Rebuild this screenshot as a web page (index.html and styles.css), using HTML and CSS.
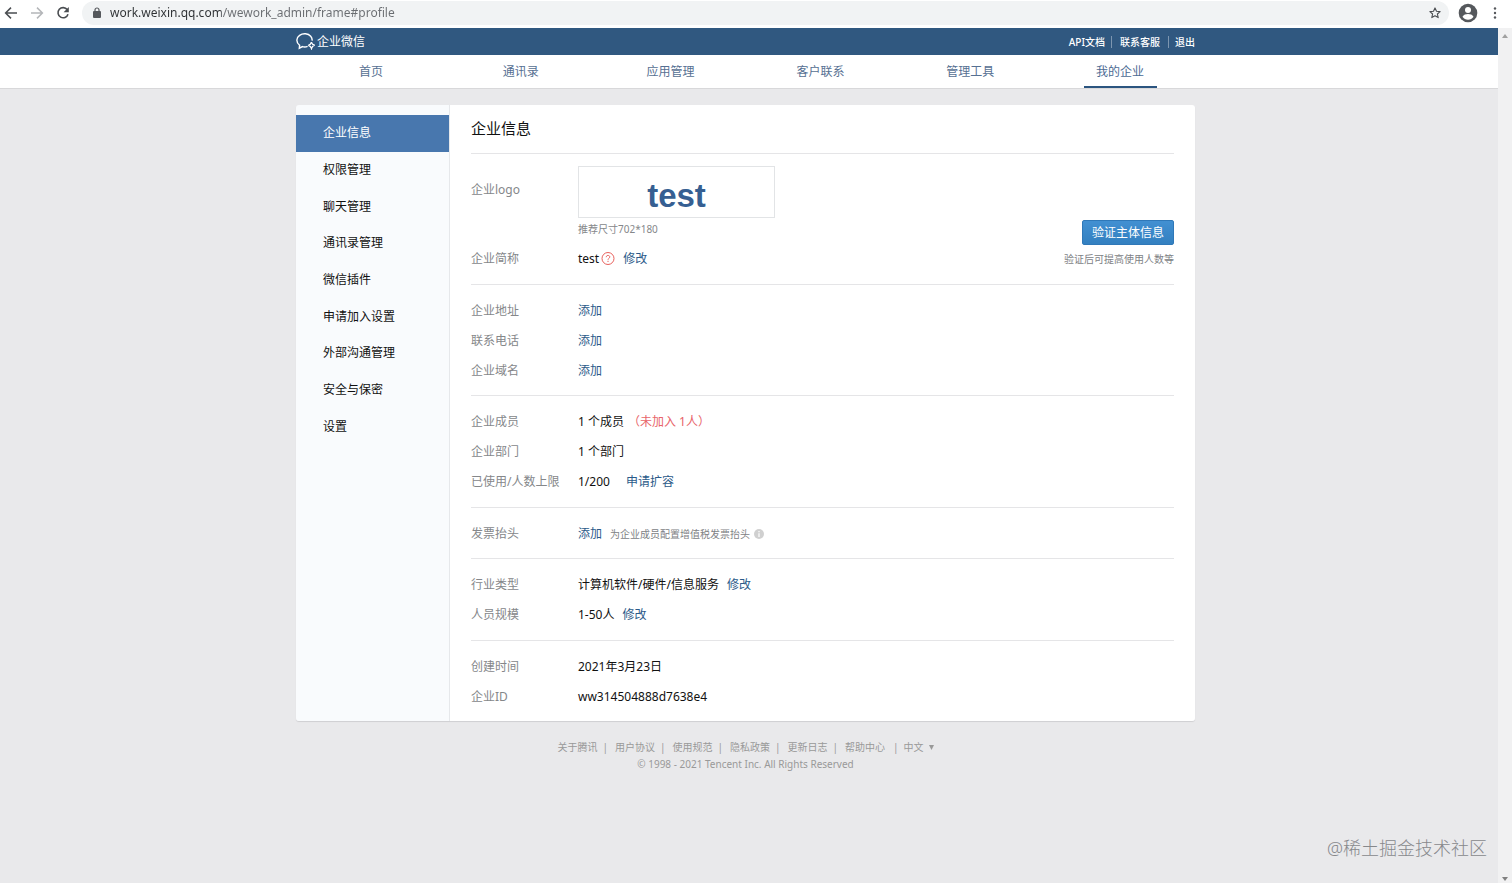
FILE: index.html
```html
<!DOCTYPE html>
<html lang="zh-CN">
<head>
<meta charset="utf-8">
<title>企业微信</title>
<link rel="stylesheet" href="styles.css">
</head>
<body>
<div class="browser">
  <button class="browser-btn" aria-label="后退"><svg width="14" height="14" viewBox="0 0 14 14" fill="none" stroke="#4a4d51" stroke-width="1.5"><path d="M13 7H1.8M7 1.6 1.6 7 7 12.4"/></svg></button>
  <button class="browser-btn" aria-label="前进"><svg width="14" height="14" viewBox="0 0 14 14" fill="none" stroke="#b4b6b9" stroke-width="1.5"><path d="M1 7h11.2M7 1.6 12.4 7 7 12.4"/></svg></button>
  <button class="browser-btn" aria-label="刷新"><svg width="14" height="14" viewBox="0 0 14 14"><path d="M11.2 3.6A5.1 5.1 0 1 0 12 8.2" fill="none" stroke="#4a4d51" stroke-width="1.6"/><path d="M12.8 1v5.2H7.6z" fill="#4a4d51"/></svg></button>
  <label class="address">
    <svg width="10" height="12" viewBox="0 0 10 12"><rect x="1" y="4" width="8" height="7" rx="1" fill="#55585c"/><path d="M3 4.5V3a2 2 0 0 1 4 0v1.500" fill="none" stroke="#55585c" stroke-width="1.2"/></svg>
    <input class="address-input" type="text" aria-label="地址" value="work.weixin.qq.com/wework_admin/frame#profile">
    <svg width="14" height="14" viewBox="0 0 14 14"><path d="m7 1.900 1.500 3.300 3.600.4-2.700 2.400.8 3.600L7 9.800l-3.200 1.800.8-3.600L1.900 5.600l3.600-.4z" fill="none" stroke="#4a4d51" stroke-width="1.100" stroke-linejoin="round"/></svg>
  </label>
  <button class="browser-btn browser-user" aria-label="用户"><svg width="20" height="20" viewBox="0 0 20 20"><circle cx="10" cy="10" r="9.300" fill="#55585c"/><circle cx="10" cy="7" r="3" fill="#fff"/><path d="M4.500 13.700c1-2 3.300-2.700 5.500-2.700s4.500.7 5.500 2.700c-1.200 1.900-3.300 3-5.500 3s-4.300-1.100-5.500-3z" fill="#fff"/></svg></button>
  <button class="browser-btn browser-more" aria-label="更多"><svg width="4" height="14" viewBox="0 0 4 14" fill="#55585c"><circle cx="2" cy="2.500" r="1.200"/><circle cx="2" cy="7" r="1.200"/><circle cx="2" cy="11.500" r="1.200"/></svg></button>
</div>
<div class="viewport">
  <div class="page">
    <header>
      <div class="topbar">
        <div class="wrap topbar-inner">
          <a class="brand" href="#">
            <svg width="20" height="17" viewBox="0 0 20 17" fill="none" stroke="#fff" stroke-width="1.400"><path d="M11.600 13.300c-1.600.7-3.500.8-5.100.3L3.300 15.200l.3-2.900C-.2 9.300.1 4.700 3.600 2.300 7-.1 12.200.3 14.700 3.200c1.100 1.300 1.600 2.800 1.400 4.400"/><path d="M15.400 9.200c.4 1.600 1.500 2.600 3.300 3-1.700.5-2.700 1.500-3.200 3.300-.5-1.800-1.500-2.800-3.200-3.200 1.700-.4 2.700-1.400 3.100-3.100z" stroke-width="1.300"/></svg>
            <span>企业微信</span>
          </a>
          <div class="toplinks"><a href="#">API文档</a><a class="support" href="#">联系客服</a><a class="logout" href="#">退出</a></div>
        </div>
      </div>
      <nav class="mainnav">
        <div class="wrap mainnav-inner">
          <a href="#">首页</a><a href="#">通讯录</a><a href="#">应用管理</a><a href="#">客户联系</a><a href="#">管理工具</a><a class="current" href="#">我的企业</a>
        </div>
      </nav>
    </header>
    <div class="page-body">
    <div class="wrap card">
      <nav class="sidebar">
        <a class="active" href="#">企业信息</a><a href="#">权限管理</a><a href="#">聊天管理</a><a href="#">通讯录管理</a><a href="#">微信插件</a><a href="#">申请加入设置</a><a href="#">外部沟通管理</a><a href="#">安全与保密</a><a href="#">设置</a>
      </nav>
      <main class="content">
        <h1>企业信息</h1>
        <section class="intro">
          <div class="intro-main">
            <div class="logo-row">
              <span class="label">企业logo</span>
              <div><div class="logo-box">test</div><div class="hint">推荐尺寸702*180</div></div>
            </div>
            <div class="row"><span class="label">企业简称</span><span>test</span>
              <svg class="help" width="14" height="14" viewBox="0 0 14 14" fill="none" stroke="#e8605c"><circle cx="7" cy="6.500" r="6"/><path d="M5.200 5.200c0-2.400 3.600-2.300 3.600-.2 0 1.300-1.800 1.400-1.800 2.700M7 8.800v1.200"/></svg>
              <a href="#">修改</a></div>
          </div>
          <div class="verify"><button class="verify-btn">验证主体信息</button><span class="note">验证后可提高使用人数等</span></div>
        </section>
        <section>
          <div class="row"><span class="label">企业地址</span><a href="#">添加</a></div>
          <div class="row"><span class="label">联系电话</span><a href="#">添加</a></div>
          <div class="row"><span class="label">企业域名</span><a href="#">添加</a></div>
        </section>
        <section class="roomy">
          <div class="row"><span class="label">企业成员</span><span>1 个成员</span><span class="warn">（未加入 1人）</span></div>
          <div class="row"><span class="label">企业部门</span><span>1 个部门</span></div>
          <div class="row wide-gap"><span class="label">已使用/人数上限</span><span>1/200</span><a href="#">申请扩容</a></div>
        </section>
        <section>
          <div class="row"><span class="label">发票抬头</span><a href="#">添加</a><span class="note">为企业成员配置增值税发票抬头</span>
            <svg class="info" width="10" height="10" viewBox="0 0 10 10"><circle cx="5" cy="5" r="5" fill="#d0d0d0"/><path d="M5 2v1.300M5 4.200V8" stroke="#fff" stroke-width="1.200"/></svg></div>
        </section>
        <section class="roomy">
          <div class="row"><span class="label">行业类型</span><span>计算机软件/硬件/信息服务</span><a href="#">修改</a></div>
          <div class="row"><span class="label">人员规模</span><span>1-50人</span><a href="#">修改</a></div>
        </section>
        <section>
          <div class="row"><span class="label">创建时间</span><span>2021年3月23日</span></div>
          <div class="row"><span class="label">企业ID</span><span>ww314504888d7638e4</span></div>
        </section>
      </main>
    </div>
    <footer class="wrap footer">
      <div class="footer-links"><a href="#">关于腾讯</a><i>|</i><a href="#">用户协议</a><i>|</i><a href="#">使用规范</a><i>|</i><a href="#">隐私政策</a><i>|</i><a href="#">更新日志</a><i>|</i><a href="#">帮助中心</a><i class="last">|</i><button class="lang">中文 <svg width="5" height="5" viewBox="0 0 5 5"><path d="M0 0h5L2.500 5z" fill="#999"/></svg></button></div>
      <div>© 1998 - 2021 Tencent Inc. All Rights Reserved</div>
    </footer>
    </div>
    <div class="watermark">@稀土掘金技术社区</div>
  </div>
  <div class="scrollbar">
    <svg width="6" height="4" viewBox="0 0 6 4"><path d="M0 4h6L3 0z" fill="#a0a0a0"/></svg>
    <svg width="6" height="4" viewBox="0 0 6 4"><path d="M0 0h6L3 4z" fill="#808080"/></svg>
  </div>
</div>
</body>
</html>
```
FILE: styles.css
```css
* { box-sizing: border-box; }
body {
  margin: 0;
  min-height: 100vh;
  display: flex;
  flex-direction: column;
  background: #fff;
  color: #111;
  font: 12px/18px "Noto Sans", "Noto Sans CJK SC", sans-serif;
}
a { color: #2b5a89; text-decoration: none; }
button { border: 0; padding: 0; background: none; font: inherit; color: inherit; }
svg { display: block; flex: none; }

.browser { display: flex; align-items: center; height: 28px; padding: 0 15px 3px 4px; }
.browser-btn { display: flex; margin-right: 12px; }
.address {
  flex: 1;
  display: flex;
  align-items: center;
  height: 24px;
  padding: 0 7px 0 10px;
  border-radius: 12px;
  background: #f1f3f4;
}
.address-input {
  flex: 1;
  min-width: 0;
  margin-left: 8px;
  padding: 0;
  border: 0;
  outline: 0;
  font: inherit;
  color: transparent;
  background: linear-gradient(90deg, #2e3134 111px, #6a6d71 111px);
  -webkit-background-clip: text;
  background-clip: text;
}
.browser-user { margin: 0 0 0 9px; }
.browser-more { margin: 0 0 0 15px; }

.viewport { flex: 1; display: flex; }
.page { flex: 1; position: relative; background: #e9e9eb; }
.scrollbar {
  width: 14px;
  padding: 6px 0 2px;
  display: flex;
  flex-direction: column;
  justify-content: space-between;
  align-items: center;
  background: #f1f1f2;
}
.wrap { max-width: 899px; margin: 0 auto; }
.topbar, .mainnav, .page-body { padding-right: 7px; }

.topbar { background: #305880; }
.topbar-inner { display: flex; justify-content: space-between; align-items: center; height: 27px; }
.brand { display: flex; align-items: center; gap: 1px; color: #fff; }
.toplinks { display: flex; font-size: 10px; line-height: 12px; font-weight: 500; }
.toplinks a { color: #fff; }
.support { margin-left: 6px; padding-left: 8px; border-left: 1px solid #7d96b0; }
.logout { margin-left: 8px; padding-left: 6px; border-left: 1px solid #7d96b0; }

.mainnav { background: #fff; border-bottom: 1px solid #d8d8da; }
.mainnav-inner { display: grid; grid-template-columns: repeat(6, 1fr); justify-items: center; }
.mainnav a { width: 73px; height: 33px; line-height: 34px; text-align: center; color: #567092; }
.mainnav .current { border-bottom: 2px solid #2b5580; color: #4b6a93; }

.card {
  display: flex;
  margin-top: 16px;
  border-radius: 3px;
  box-shadow: 0 1px 1px #cfcfd2;
  background: linear-gradient(90deg, #f9fbfd 153px, #e6e8eb 153px, #e6e8eb 154px, #fff 154px);
}
.sidebar {
  width: 154px;
  height: 340px;
  padding-top: 10px;
  display: grid;
  grid-auto-rows: 1fr;
}
.sidebar a { display: flex; align-items: center; padding-left: 27px; color: #111; }
.sidebar .active { background: #4877ae; color: #fff; margin-right: 1px; }

.content { flex: 1; padding: 0 21px; }
h1 { margin: 0; height: 48px; font-size: 15px; line-height: 47px; font-weight: 400; }
section { padding: 10px 0; border-top: 1px solid #e5e5e7; }
.roomy { padding-bottom: 11px; }
.row { display: flex; align-items: center; min-height: 30px; padding-top: 2px; gap: 8px; }
.label { width: 107px; flex: none; color: #85878a; }
.row .label { margin-right: -8px; }
.wide-gap { gap: 16px; }
.wide-gap .label { margin-right: -16px; }
.intro { display: flex; justify-content: space-between; padding: 12px 0 11px; }
.logo-row { display: flex; }
.logo-row .label { line-height: 48px; }
.logo-box {
  width: 197px;
  height: 52px;
  padding-top: 3px;
  border: 1px solid #e2e4e6;
  text-align: center;
  font: bold 33px/52px "Liberation Sans", Arial, sans-serif;
  color: #365f92;
}
.hint { margin-bottom: 3px; font-size: 10px; line-height: 22px; color: #85878a; }
.help { margin-left: -6px; }
.warn { color: #e8646a; margin-left: -4px; }
.note { font-size: 10px; color: #808285; }
.info { margin-left: -4px; }
.verify { display: flex; flex-direction: column; align-items: flex-end; justify-content: flex-end; gap: 5px; padding-bottom: 5px; }
.verify-btn {
  height: 25px;
  padding: 0 9px;
  border: 1px solid #2f78b8;
  border-radius: 2px;
  background: linear-gradient(#4290d2, #3380c0);
  color: #fff;
}

.footer { margin-top: 18px; text-align: center; font-size: 10px; line-height: 17px; color: #999; }
.footer-links { display: flex; justify-content: center; }
.footer a { color: #999; }
.footer i { font-style: normal; margin: 0 7px 0 5px; }
.footer .last { margin: 0 5px 0 8px; }
.lang { display: flex; align-items: center; gap: 5px; }
.watermark { position: absolute; right: 11px; bottom: 22px; font-size: 18px; line-height: 26px; font-weight: 300; color: #87888b; }
```
